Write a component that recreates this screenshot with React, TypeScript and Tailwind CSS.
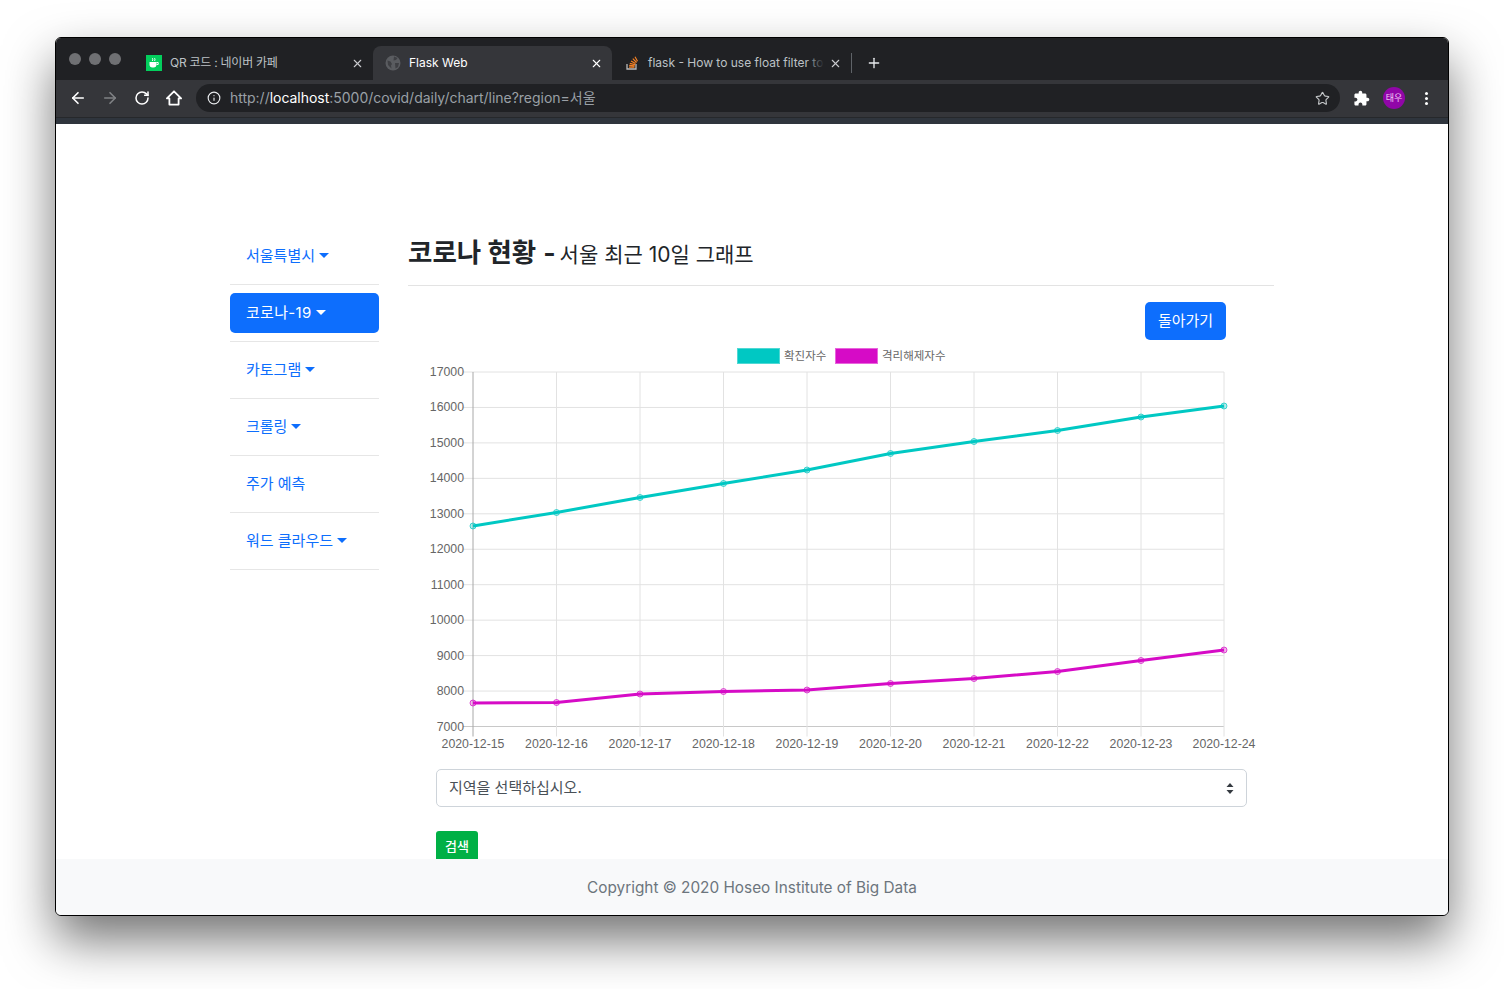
import { ArrowLeft, ArrowRight, RotateCw, Info, Star, X, Plus } from 'lucide-react';

const dates = ['2020-12-15', '2020-12-16', '2020-12-17', '2020-12-18', '2020-12-19', '2020-12-20', '2020-12-21', '2020-12-22', '2020-12-23', '2020-12-24'];
const yLabels = [17000, 16000, 15000, 14000, 13000, 12000, 11000, 10000, 9000, 8000, 7000];

// chart coords are offsets from the svg box, which starts at page x=408 y=340
const xs = [65, 148.5, 232, 315.5, 399, 482.5, 566, 649.5, 733, 816];
const topY = 32;
const bottomY = 386.5;
const cyan = [186, 172.5, 157.5, 143.5, 130, 113.5, 101.5, 90.5, 77, 66];
const magenta = [363, 362.5, 354, 351.5, 350, 343.5, 338.5, 331.5, 320.5, 310];

const sideItems = [
  { label: '서울특별시', caret: true },
  { label: '코로나-19', caret: true, active: true },
  { label: '카토그램', caret: true },
  { label: '크롤링', caret: true },
  { label: '주가 예측', caret: false },
  { label: '워드 클라우드', caret: true },
];

function Caret() {
  return <span className="inline-block ml-[4px] align-[3px] border-t-[5px] border-x-[5px] border-x-transparent border-t-current" />;
}

function LineChart() {
  const series = [
    { color: '#00c8c3', ys: cyan },
    { color: '#d60bc6', ys: magenta },
  ];
  return (
    <svg width="866" height="420" className="block" style={{ fontFamily: '"Liberation Sans", sans-serif' }}>
      <rect x="329.5" y="8.5" width="42" height="15" fill="#00c8c3" stroke="#4fd8d4" />
      <text x="376" y="20" fontSize="11.5" fill="#666" style={{ fontFamily: '"Noto Sans CJK KR", sans-serif' }}>확진자수</text>
      <rect x="427.5" y="8.5" width="42" height="15" fill="#d60bc6" stroke="#e864dc" />
      <text x="474" y="20" fontSize="11.5" fill="#666" style={{ fontFamily: '"Noto Sans CJK KR", sans-serif' }}>격리해제자수</text>

      {yLabels.map((v, i) => {
        const y = topY + (i * (bottomY - topY)) / 10;
        return (
          <g key={v}>
            <line x1="55" x2="816" y1={y} y2={y} stroke={i === 10 ? '#c8c8c8' : '#e2e2e2'} />
            <text x="56" y={y + 4} fontSize="12.3" fill="#666" textAnchor="end">{v}</text>
          </g>
        );
      })}
      {xs.map((x, i) => (
        <g key={x}>
          <line x1={x} x2={x} y1={topY} y2={bottomY + 10} stroke={i === 0 ? '#a8a8a8' : '#e2e2e2'} />
          <text x={x} y="408" fontSize="12.3" fill="#666" textAnchor="middle">{dates[i]}</text>
        </g>
      ))}
      {series.map((s) => (
        <g key={s.color}>
          <polyline points={xs.map((x, i) => `${x},${s.ys[i]}`).join(' ')} fill="none" stroke={s.color} strokeWidth="3" strokeLinejoin="round" />
          {xs.map((x, i) => (
            <circle key={x} cx={x} cy={s.ys[i]} r="3" fill={s.color} fillOpacity="0.3" stroke={s.color} strokeOpacity="0.7" strokeWidth="1" />
          ))}
        </g>
      ))}
    </svg>
  );
}

function Tab({ title, active, icon, fade, tight }: { title: string; active?: boolean; icon: React.ReactNode; fade?: boolean; tight?: boolean }) {
  return (
    <div className={`relative flex items-center h-[34px] w-[239px] pl-[12px] pr-[9px] rounded-t-[8px] ${active ? 'bg-[#35363a] text-white' : 'text-[#bdc1c6]'}`}>
      <span className="w-[16px] h-[16px] mr-[8px] flex items-center justify-center shrink-0">{icon}</span>
      <span className={`text-[12px] whitespace-nowrap flex-1 ${tight ? 'tracking-[-0.25px]' : ''}`}>{title}</span>
      {fade && <span className="absolute right-[27px] top-0 w-[18px] h-full bg-gradient-to-r from-transparent to-[#202124]" />}
      <X size={13} strokeWidth={2} className={`shrink-0 ml-[2px] ${active ? 'text-white' : 'text-[#c8cacd]'}`} />
    </div>
  );
}

export default function App() {
  return (
    <div className="w-[1504px] h-[989px] bg-white overflow-hidden pt-[37px] pl-[55px]" style={{ fontFamily: 'Inter, "Noto Sans CJK KR", sans-serif' }}>
      <div className="w-[1394px] h-[879px] flex flex-col rounded-[6px] overflow-hidden border border-black bg-white shadow-[0_24px_50px_rgba(0,0,0,0.55)]">
        <div className="h-[42px] bg-[#202124] flex items-end pl-[78px] shrink-0 relative">
          <div className="absolute left-[13px] top-[15px] flex gap-[8px]">
            <span className="w-[12px] h-[12px] rounded-full bg-[#6f7073]" />
            <span className="w-[12px] h-[12px] rounded-full bg-[#6f7073]" />
            <span className="w-[12px] h-[12px] rounded-full bg-[#6f7073]" />
          </div>
          <Tab
            title="QR 코드 : 네이버 카페"
            tight
            icon={
              <svg width="16" height="16" viewBox="0 0 16 16">
                <rect width="16" height="16" fill="#03cf5d" />
                <path d="M3.5 7h7v2.5A3 3 0 0 1 7.5 12.5h-1a3 3 0 0 1-3-3z" fill="#fff" />
                <path d="M10.5 7.5h1.7v2h-1.7" fill="none" stroke="#fff" />
                <path d="M6 3c1 .8 1 1.8.3 3M8.2 3c1 .8 1 1.8.3 3" fill="none" stroke="#fff" />
              </svg>
            }
          />
          <Tab
            title="Flask Web"
            active
            icon={
              <svg width="16" height="16" viewBox="0 0 16 16">
                <circle cx="8" cy="8" r="7.5" fill="#5a5c60" />
                <path d="M2.5 5.5l3 1 1.5 2.5-1 1.5.5 3L3 10zM9 1.5l3.5 1.5-1.5 2-2.5.5zM10 8h4l-1 4-2.5 1.5z" fill="#3e3f43" />
              </svg>
            }
          />
          <Tab
            title="flask - How to use float filter to"
            fade
            icon={
              <svg width="16" height="16" viewBox="0 0 16 16">
                <path d="M3 9v5h9V9" fill="none" stroke="#bcbbbb" strokeWidth="1.3" />
                <path d="M5 12.2h5.5M5.2 10.4l5.4 .5M5.8 8.3l5.2 1.4M7 5.9l4.6 2.7M8.8 3.6l3.8 3.9M11 1.7l2.5 4.6" stroke="#f48024" strokeWidth="1.2" fill="none" />
              </svg>
            }
          />
          <span className="w-px h-[20px] bg-[#5f6368] mb-[7px]" />
          <Plus size={16} strokeWidth={2} className="text-[#e8eaed] ml-[14px] mb-[9px]" />
        </div>

        <div className="h-[37px] bg-[#35363a] flex items-center pl-[13px] pr-[14px] pb-[1px] shrink-0">
          <ArrowLeft size={18} strokeWidth={2.2} className="text-white" />
          <ArrowRight size={18} strokeWidth={2.2} className="text-[#7f8184] ml-[14px]" />
          <RotateCw size={16} strokeWidth={2.3} className="text-white ml-[15px]" />
          <svg width="18" height="18" viewBox="0 0 18 18" className="ml-[15px]">
            <path d="M9 2.3L1.9 9.4H4.4V15.6H13.6V9.4H16.1Z" fill="none" stroke="#fff" strokeWidth="1.8" strokeLinejoin="round" />
          </svg>
          <div className="ml-[13px] w-[1144px] h-[28px] rounded-full bg-[#202124] flex items-center pl-[11px] pr-[10px]">
            <Info size={14} strokeWidth={2} className="text-[#e8eaed]" />
            <span className="ml-[9px] pb-[1px] text-[14px] text-[#9aa0a6] whitespace-nowrap flex-1 tracking-[-0.02px]">
              http://<span className="text-white">localhost</span>:5000/covid/daily/chart/line?region=서울
            </span>
            <Star size={15} strokeWidth={1.8} className="text-[#c4c7c9]" />
          </div>
          <svg width="17" height="17" viewBox="0 0 24 24" className="ml-[13px]">
            <path fill="#fff" d="M20.5 11H19V7c0-1.1-.9-2-2-2h-4V3.5C13 2.12 11.88 1 10.5 1S8 2.12 8 3.5V5H4c-1.1 0-1.99.9-1.99 2v3.8H3.5c1.49 0 2.7 1.21 2.7 2.7s-1.21 2.7-2.7 2.7H2V20c0 1.1.9 2 2 2h3.8v-1.5c0-1.49 1.21-2.7 2.7-2.7 1.49 0 2.7 1.21 2.7 2.7V22H17c1.1 0 2-.9 2-2v-4h1.5c1.38 0 2.5-1.12 2.5-2.5S21.88 11 20.5 11z" />
          </svg>
          <span className="ml-[13px] w-[22px] h-[22px] rounded-full bg-[#9106a8] text-[9px] text-[#f3c9f7] flex items-center justify-center whitespace-nowrap">태우</span>
          <span className="ml-[20px] flex flex-col gap-[2px]">
            <span className="w-[3px] h-[3px] rounded-full bg-white" />
            <span className="w-[3px] h-[3px] rounded-full bg-white" />
            <span className="w-[3px] h-[3px] rounded-full bg-white" />
          </span>
        </div>
        <div className="h-[7px] bg-[#2f353d] border-t border-[#26282b] shrink-0" />

        <div className="flex-1 flex pl-[174px] pt-[104px] overflow-hidden">
          <div className="w-[149px] flex flex-col shrink-0">
            {sideItems.map((item) => (
              <div key={item.label} className="h-[57px] flex items-center border-b border-[#e6e6e6]">
                <div className={`w-full h-[40px] px-[16px] rounded-[5px] flex items-center text-[15px] whitespace-nowrap ${item.active ? 'bg-[#0d6efd] text-white tracking-[0.3px]' : 'text-[#0d6efd]'}`}>
                  <span>
                    {item.label}
                    {item.caret && <Caret />}
                  </span>
                </div>
              </div>
            ))}
          </div>

          <div className="ml-[29px] w-[866px]">
            <div className="h-[58px] border-b border-[#e3e3e3] flex items-baseline pt-[5px] text-[#212529]">
              <span className="text-[26.5px] font-bold">코로나 현황</span>
              <span className="text-[26.5px] font-bold ml-[7px]">-</span>
              <span className="text-[21px] ml-[4px]">서울 최근 10일 그래프</span>
            </div>
            <div className="flex justify-end pr-[48px] pt-[16px]">
              <button className="h-[38px] w-[81px] rounded-[5px] bg-[#0d6efd] text-white text-[15px]">돌아가기</button>
            </div>
            <LineChart />
            <div className="ml-[28px] mt-[9px] w-[811px] h-[38px] rounded-[5px] border border-[#ced4da] flex items-center justify-between pl-[12px] pr-[12px] text-[15px] text-[#495057]">
              <span>지역을 선택하십시오.</span>
              <svg width="8" height="11" viewBox="0 0 8 11">
                <path d="M4 0l3.5 4h-7zM4 11l3.5-4h-7z" fill="#343a40" />
              </svg>
            </div>
            <button className="ml-[28px] mt-[24px] w-[42px] h-[30px] pt-[1px] rounded-t-[3px] bg-[#00b045] text-white text-[13px] font-medium">검색</button>
          </div>
        </div>

        <div className="h-[56px] pt-[1px] bg-[#f8f9fa] flex items-center justify-center text-[15.35px] text-[#6c757d] shrink-0">
          Copyright © 2020 Hoseo Institute of Big Data
        </div>
      </div>
    </div>
  );
}
